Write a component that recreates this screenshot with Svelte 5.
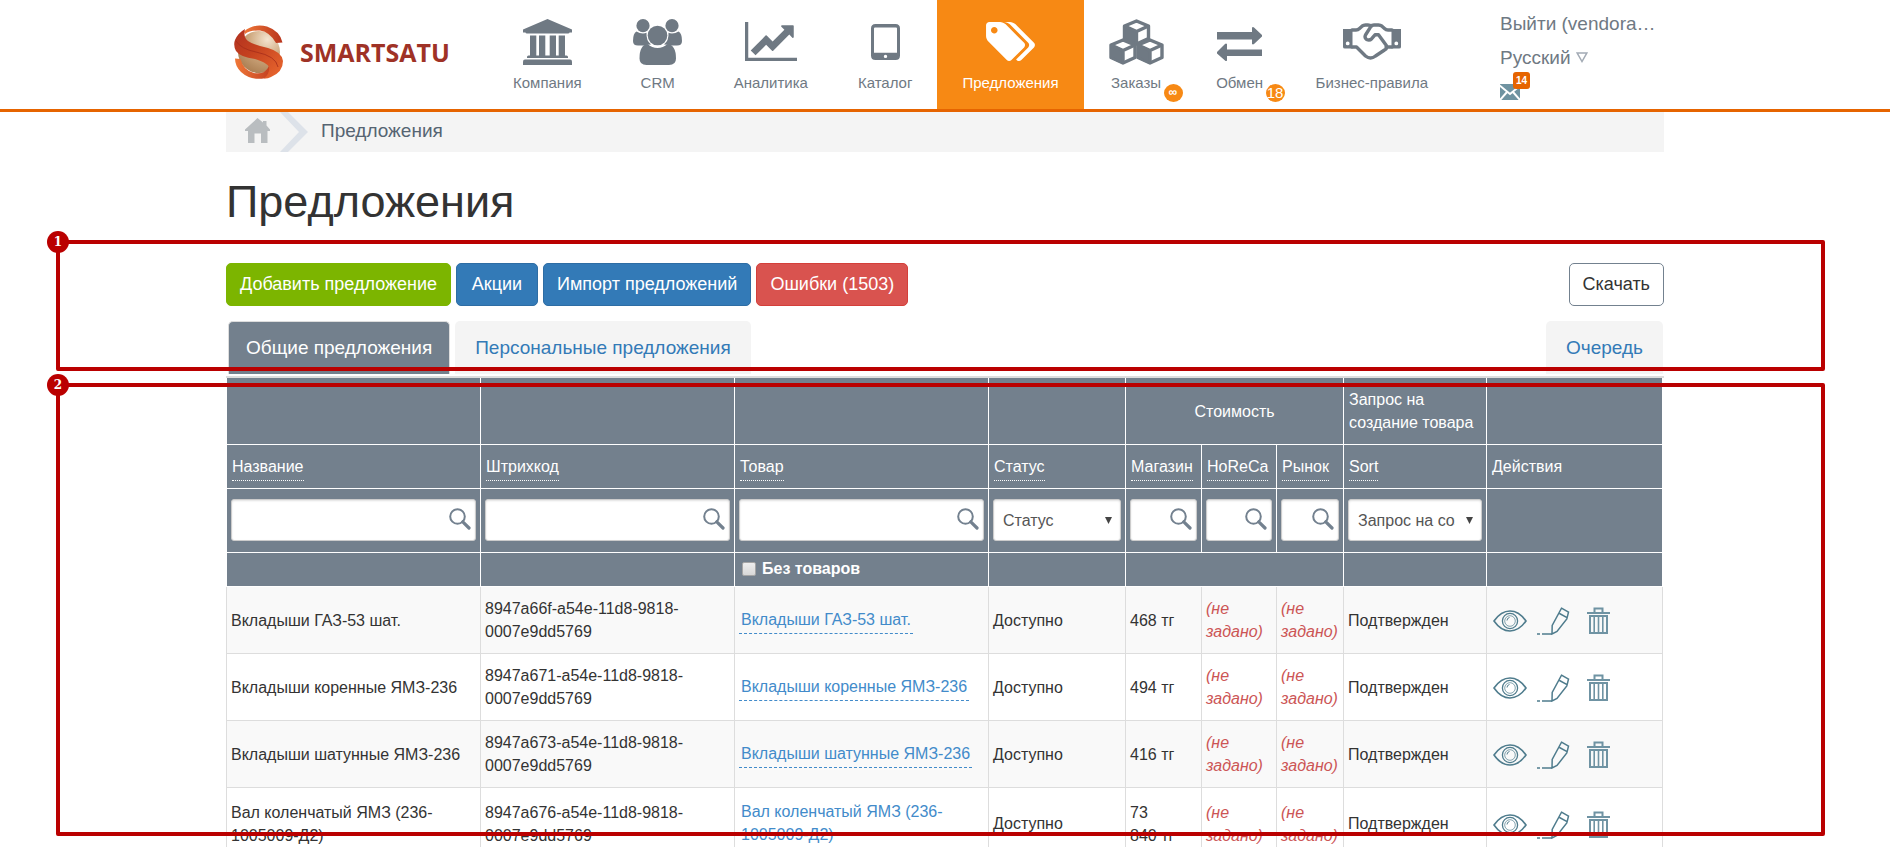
<script lang="ts">
  type NavItem = { id: string; label: string; active?: boolean; badge?: string; small?: boolean };

  const nav: NavItem[] = [
    { id: "company", label: "Компания" },
    { id: "crm", label: "CRM" },
    { id: "analytics", label: "Аналитика" },
    { id: "catalog", label: "Каталог" },
    { id: "offers", label: "Предложения", active: true },
    { id: "orders", label: "Заказы", badge: "∞", small: true },
    { id: "exchange", label: "Обмен", badge: "18" },
    { id: "rules", label: "Бизнес-правила" },
  ];

  const rows = [
    { name: "Вкладыши ГАЗ-53 шат.", code: "8947a66f-a54e-11d8-9818-0007e9dd5769", price: "468 тг" },
    { name: "Вкладыши коренные ЯМЗ-236", code: "8947a671-a54e-11d8-9818-0007e9dd5769", price: "494 тг" },
    { name: "Вкладыши шатунные ЯМЗ-236", code: "8947a673-a54e-11d8-9818-0007e9dd5769", price: "416 тг" },
    { name: "Вал коленчатый ЯМЗ (236-1005009-Д2)", code: "8947a676-a54e-11d8-9818-0007e9dd5769", price: "73\n840 тг" },
  ];

  const sortable = ["Название", "Штрихкод", "Товар", "Статус", "Магазин", "HoReCa", "Рынок", "Sort"];

  let filters = $state({ name: "", code: "", product: "", shop: "", horeca: "", market: "" });
  let withoutGoods = $state(false);
</script>

{#snippet navIcon(id: string)}
  {#if id === "company"}
    <svg width="49" height="46" viewBox="0 0 49 46" fill="currentColor">
      <path d="M24.500 0 49 10.500V13.500H46.500Q46.500 14.500 45 14.500H4Q2.500 14.500 2.500 13.500H0V10.500Z" />
      <path d="M7 16.500h6.300v20H16v-20h6.300v20h4.400v-20H33v20h2.700v-20H42v20h1.500q1.500 0 1.500 1.500v1H4v-1q0-1.500 1.500-1.500H7z" />
      <path d="M2 40.500h45q2 0 2 2V46H0v-3.500q0-2 2-2z" />
    </svg>
  {:else if id === "crm"}
    <svg width="49" height="46" viewBox="0 0 49 46" fill="currentColor">
      <circle cx="10" cy="6.700" r="6.600" />
      <circle cx="39" cy="6.700" r="6.600" />
      <circle cx="24.500" cy="16.500" r="9.800" />
      <path d="M3.500 12.500q3 2 6.500 2 2 0 3.500-.700-.500 8 4.500 11.700-4 0-7 1H5q-5 0-5-4.500 0-8 3.500-9.500z" />
      <path d="M45.500 12.500q-3 2-6.500 2-2 0-3.500-.700.500 8-4.500 11.700 4 0 7 1H44q5 0 5-4.500 0-8-3.500-9.500z" />
      <path d="M14.500 25q4.500 4 10 4t10-4q8.500 1 8.500 14.500 0 6.500-7 6.500H13.500Q6.500 46 6.500 39.500 6.500 26 14.500 25z" />
    </svg>
  {:else if id === "analytics"}
    <svg width="52" height="39" viewBox="0 128 2048 1536" fill="currentColor">
      <path d="M2048 1536v128h-2048v-1536h128v1408h1920zm-128-1248v435q0 21-19.500 29.500t-35.500-7.500l-121-121-633 633q-10 10-23 10t-23-10l-233-233-416 416-192-192 585-585q10-10 23-10t23 10l233 233 464-464-121-121q-16-16-7.500-35.500t29.500-19.500h435q14 0 23 9t9 23z" />
    </svg>
  {:else if id === "catalog"}
    <svg width="29" height="36" viewBox="0 0 29 36" fill="currentColor">
      <path fill-rule="evenodd" d="M4.500 0h20Q29 0 29 4.500v27q0 4.500-4.500 4.500h-20Q0 36 0 31.500v-27Q0 0 4.500 0zM4 3.500Q3 3.500 3 4.500v24.200h23V4.500q0-1-1-1zM14.500 30.700a1.700 1.700 0 1 0 0 3.400 1.700 1.700 0 0 0 0-3.400z" />
    </svg>
  {:else if id === "offers"}
    <svg width="49" height="39" viewBox="128 128 1900 1515" fill="currentColor">
      <path d="M576 448q0-53-37.500-90.500t-90.500-37.500-90.500 37.500-37.500 90.500 37.500 90.500 90.500 37.500 90.500-37.500 37.500-90.500zm1067 576q0 53-37 90l-491 492q-39 37-91 37-53 0-90-37l-715-716q-38-37-64.500-101t-26.500-117v-416q0-52 38-90t90-38h416q53 0 117 26.500t102 64.500l715 714q37 39 37 91zm384 0q0 53-37 90l-491 492q-39 37-91 37-36 0-59-14t-53-45l470-470q37-37 37-90 0-52-37-91l-715-714q-38-38-102-64.500t-117-26.500h224q53 0 117 26.500t102 64.500l715 714q37 39 37 91z" />
    </svg>
  {:else if id === "orders"}
    <svg width="55" height="46" viewBox="0 0 55 46" fill="none" stroke="currentColor" stroke-width="3.400" stroke-linejoin="round">
      {#each [[27.5, 2], [14, 21], [41, 21]] as [x, y]}
        <path fill="#fff" d="M{x} {y}l12 5v12.500l-12 5.500-12-5.500V{y + 5}z" />
        <path fill="currentColor" stroke-width="2" d="M{x - 12} {y + 5}l12 5.500V{y + 23}l-12-5.500z" />
        <path d="M{x - 12} {y + 5}l12 5.500 12-5.500M{x} {y + 10.5}V{y + 23}" />
      {/each}
    </svg>
  {:else if id === "exchange"}
    <svg width="45" height="38" viewBox="0 -4 45 38" fill="currentColor">
      <path d="M0 5h35V.500q1-1 2 0L45 8q.500.700 0 1.400L37 17q-1 .800-2 0v-4.500H0zM45 22.500v6.500H10v4.500q-1 1-2 0L0 26.500q-.500-.700 0-1.400L8 17q1-.800 2 0v5.500z" />
    </svg>
  {:else}
    <svg width="58" height="37" viewBox="0 0 58 37" fill="none" stroke="currentColor" stroke-width="3.400" stroke-linejoin="round" stroke-linecap="round">
      <path fill="currentColor" stroke="none" fill-rule="evenodd" d="M0 6h9.500v19.500H2Q0 25.500 0 24zM4.700 18.500a1.900 1.900 0 1 0 0 3.800 1.900 1.900 0 0 0 0-3.800zM58 6h-9.500v19.500H56q2 0 2-1.500zM53.300 18.500a1.900 1.900 0 1 1 0 3.800 1.900 1.900 0 0 1 0-3.800z" />
      <path d="M9 7h4q2 0 3.500-1.500L19 3.200Q20.500 2 22.500 2H25q2 0 3.500 1.200M49 7h-4q-2 0-3.500-1.500L39 3.200Q37.500 2 35.500 2H31q-2 0-3.200 1.700L22.500 12q-1.300 3 1.200 4.500 2.800 1.500 5-.800l3.300-3.900h3.500l7.500 10.200q2 3.300-1.500 5l-9 6Q27.500 37 22.500 33L13.500 24H9M43 24h6" />
    </svg>
  {/if}
{/snippet}

{#snippet search(key: keyof typeof filters, label: string)}
  <div class="field">
    <input type="text" aria-label={label} bind:value={filters[key]} />
    <svg width="22" height="22" viewBox="0 0 22 22" fill="none" stroke="#73818f">
      <circle cx="8.500" cy="8.500" r="7.300" stroke-width="2" />
      <path d="M13.800 13.800 20 20" stroke-width="3.200" stroke-linecap="round" />
    </svg>
  </div>
{/snippet}

{#snippet picker(label: string)}
  <div class="field">
    <select aria-label={label}><option>{label}</option></select>
    <svg class="caret" width="7" height="7" viewBox="0 0 7 7" fill="#444"><path d="M0 0h7L3.500 7z" /></svg>
  </div>
{/snippet}

<header>
  <div class="container bar">
    <a class="logo" href="#home">
      <svg width="50" height="54" viewBox="0 0 50 54">
        <defs>
          <linearGradient id="band" x1="0" y1="0" x2="1" y2="1">
            <stop offset="0" stop-color="#b03020" />
            <stop offset=".4" stop-color="#c4411f" />
            <stop offset="1" stop-color="#ec6a30" />
          </linearGradient>
          <linearGradient id="arc" x1="0" y1="0" x2="1" y2="0">
            <stop offset="0" stop-color="#f07838" />
            <stop offset="1" stop-color="#b8341c" />
          </linearGradient>
          <radialGradient id="ball" cx=".7" cy=".2" r=".9">
            <stop offset="0" stop-color="#f4e4cf" />
            <stop offset=".5" stop-color="#cda67c" />
            <stop offset="1" stop-color="#a87c50" />
          </radialGradient>
        </defs>
        <circle cx="25" cy="27" r="21" fill="url(#ball)" />
        <path fill="url(#arc)" d="M10 6.500Q20-2 33 1.500 46 6 48.500 17.500L42 18Q36 7 26 5.500 16 5 11 9z" />
        <path fill="url(#arc)" d="M1 33.500l5.500.500Q9 45 20 48q11 2 15-7l10 3Q41 50 31 53.200 17 56 7 47 1 41 1 33.500z" />
        <path fill="url(#band)" d="M11 4Q9 12 14 16q6 4 20 7 14 4 15 13 0 11-12 16-4 2-7 1.500 6-5 5-11.500-3-5-14-8Q6 32 2 26-1 20 1 15 4 8 11 4z" />
        <path fill="none" stroke="#a52c1a" stroke-width=".8" d="M2 16q5 8 20 11 20 4 22 15" />
      </svg>
      <span>SMARTSATU</span>
    </a>

    <nav>
      {#each nav as item}
        <a href="#{item.id}" class:active={item.active}>
          <span class="pic">{@render navIcon(item.id)}</span>
          {item.label}
          {#if item.badge}
            <span class="badge" class:small={item.small}>{item.badge}</span>
          {/if}
        </a>
      {/each}
    </nav>

    <div class="user">
      <a href="#logout">Выйти (vendora…</a>
      <button type="button" class="lang">
        Русский
        <svg width="12" height="11" viewBox="0 0 12 11" fill="none" stroke="#a3abb5" stroke-width="1.500"><path d="M1.200 1h9.600L6 9.500z" /></svg>
      </button>
      <a class="mail" href="#mail" aria-label="Сообщения">
        <svg width="20" height="16" viewBox="0 0 20 16">
          <path fill="#6f93a1" d="M0 0h20v16H0z" />
          <path fill="none" stroke="#fff" stroke-width="2" d="M-1 1l11 9L21 1M0 16l7-8M20 16l-7-8" />
        </svg>
        <span class="count">14</span>
      </a>
    </div>
  </div>
</header>

<main class="container">
  <div class="crumbs">
    <a class="home" href="#home" aria-label="Главная">
      <svg width="25" height="25" viewBox="0 0 25 25" fill="#b9bdc0"><path d="M12.500 0 18 4.500V3h3.500v4.500L25 11.500V13h-2.500v12H16v-9.500H9.500V25H3V13H0v-1.500z" /></svg>
    </a>
    <svg width="28" height="40" viewBox="0 0 28 40" fill="#dde2e9"><path d="M0 0h8l20 20L8 40H0l19-20z" /></svg>
    <span>Предложения</span>
  </div>

  <h1>Предложения</h1>

  <section class="controls">
    <div class="toolbar">
      <button type="button" class="btn green">Добавить предложение</button>
      <button type="button" class="btn blue">Акции</button>
      <button type="button" class="btn blue">Импорт предложений</button>
      <button type="button" class="btn red">Ошибки (1503)</button>
      <button type="button" class="btn plain">Скачать</button>
    </div>
    <div class="tabs">
      <a class="current" href="#common">Общие предложения</a>
      <a href="#personal">Персональные предложения</a>
      <a class="last" href="#queue">Очередь</a>
    </div>
    <div class="frame frame-top"><b>1</b></div>
  </section>

  <section class="grid">
    <table>
      <colgroup>
        <col class="wide" /><col class="wide" /><col class="wide" />
        <col class="status" /><col class="shop" /><col class="horeca" /><col class="market" />
        <col class="request" /><col />
      </colgroup>
      <thead>
        <tr class="groups">
          <th></th><th></th><th></th><th></th>
          <th colspan="3" class="center">Стоимость</th>
          <th>Запрос на создание товара</th>
          <th></th>
        </tr>
        <tr class="labels">
          {#each sortable as label}
            <th><a href="#sort">{label}</a></th>
          {/each}
          <th>Действия</th>
        </tr>
        <tr class="filters">
          <td>{@render search("name", "Название")}</td>
          <td>{@render search("code", "Штрихкод")}</td>
          <td>{@render search("product", "Товар")}</td>
          <td>{@render picker("Статус")}</td>
          <td>{@render search("shop", "Магазин")}</td>
          <td>{@render search("horeca", "HoReCa")}</td>
          <td>{@render search("market", "Рынок")}</td>
          <td>{@render picker("Запрос на создание товара")}</td>
          <td></td>
        </tr>
        <tr class="extra">
          <td></td><td></td>
          <td><label><input type="checkbox" bind:checked={withoutGoods} />Без товаров</label></td>
          <td></td><td colspan="3"></td><td></td><td></td>
        </tr>
      </thead>
      <tbody>
        {#each rows as row}
          <tr>
            <td>{row.name}</td>
            <td>{row.code}</td>
            <td><a class="product" href="#product">{row.name}</a></td>
            <td>Доступно</td>
            <td class="price">{row.price}</td>
            <td class="unset">(не задано)</td>
            <td class="unset">(не задано)</td>
            <td>Подтвержден</td>
            <td>
              <div class="actions">
                <button type="button" aria-label="Просмотр">
                  <svg width="34" height="22" viewBox="0 0 34 22" fill="none" stroke="#4f7c8d" stroke-width="1.600">
                    <path d="M1 11Q8 1 17 1t16 10q-7 10-16 10T1 11z" />
                    <circle cx="17" cy="11" r="7.600" stroke-width="1.300" />
                    <circle cx="17" cy="11" r="5.300" stroke-width=".7" />
                    <path d="M14 10.500q0-2.500 2.500-3" stroke-width="1" />
                  </svg>
                </button>
                <button type="button" aria-label="Изменить">
                  <svg width="33" height="28" viewBox="0 0 33 28" fill="none" stroke="#4f7c8d" stroke-width="1.500">
                    <path d="M24.500 1.200l7 4L29.800 12 20 24.500 15 27l.200-8.500zM22.500 6.500l8 4.300M15 27H5M3 27H0" />
                  </svg>
                </button>
                <button type="button" aria-label="Удалить">
                  <svg width="23" height="28" viewBox="0 0 23 28" fill="none" stroke="#6f93a3" stroke-width="2">
                    <path d="M0 6h23M7.500 5V1.500h8V5M3 9h17v17H3z" />
                    <path d="M7.200 9v17M11.500 9v17M15.800 9v17" stroke-width="1.600" />
                  </svg>
                </button>
              </div>
            </td>
          </tr>
        {/each}
      </tbody>
    </table>
    <div class="frame frame-table"><b>2</b></div>
  </section>
</main>

<style>
  :global(body) {
    background: #fff;
    color: #333;
    font: 16px/23px "Liberation Sans", Arial, sans-serif;
    overflow-x: hidden;
  }
  * {
    box-sizing: border-box;
  }
  a {
    color: inherit;
    text-decoration: none;
  }
  button {
    font: inherit;
    color: inherit;
    background: none;
    border: 0;
    padding: 0;
    cursor: pointer;
  }
  svg {
    display: block;
  }
  .container {
    max-width: 1438px;
    margin: 0 auto;
  }

  header {
    border-bottom: 3px solid #e66400;
  }
  .bar {
    display: flex;
    height: 109px;
  }
  .logo {
    display: flex;
    align-items: center;
    gap: 16px;
    width: 262px;
    padding: 0 0 5px 8px;
    color: #9f3226;
    font: bold 25px/30px "Open Sans", sans-serif;
  }
  nav {
    display: flex;
  }
  nav a {
    position: relative;
    padding: 0 25px;
    color: #6f7983;
    font-size: 15px;
    text-align: center;
  }
  nav a.active {
    background: #f78914;
    color: #fff;
  }
  .pic {
    display: flex;
    align-items: center;
    justify-content: center;
    min-width: 52px;
    height: 71px;
    padding-top: 12px;
  }
  .badge {
    position: absolute;
    right: 6px;
    top: 84px;
    width: 19px;
    height: 18px;
    border-radius: 50%;
    background: #f78914;
    color: #fff;
    font-size: 15px;
    line-height: 18px;
  }
  .badge.small {
    font-size: 12px;
    font-weight: bold;
    line-height: 16px;
  }
  .user {
    width: 164px;
    margin-left: auto;
    padding-top: 7px;
    color: #6f7983;
    font-size: 19px;
    line-height: 34px;
  }
  .user > * {
    display: block;
  }
  .user .lang {
    display: flex;
    align-items: center;
    gap: 5px;
  }
  .user .lang svg {
    margin-bottom: 2px;
  }
  .user .mail {
    position: relative;
    width: 30px;
    padding-top: 9px;
  }
  .count {
    position: absolute;
    left: 13px;
    top: -3px;
    width: 17px;
    border-radius: 3px;
    background: #e66400;
    color: #fff;
    font-size: 10px;
    font-weight: bold;
    line-height: 17px;
    text-align: center;
  }

  .crumbs {
    display: flex;
    align-items: center;
    height: 40px;
    padding-left: 19px;
    background: #f4f4f4;
    color: #566472;
    font-size: 19px;
  }
  .home {
    margin: 0 10px 3px 0;
  }
  .crumbs span {
    margin: 0 0 3px 13px;
  }
  h1 {
    margin: 25px 0 36px;
    font-size: 45px;
    font-weight: normal;
    line-height: 50px;
  }

  .controls,
  .grid {
    position: relative;
  }
  .toolbar {
    display: flex;
    gap: 5px;
  }
  .btn {
    min-width: 82px;
    height: 43px;
    padding: 0 13px;
    border: 1px solid;
    border-radius: 5px;
    color: #fff;
    font-size: 18px;
  }
  .green {
    background: #7cb500;
    border-color: #7cb500;
  }
  .blue {
    background: #337ab7;
    border-color: #2e6da4;
  }
  .red {
    background: #d9534f;
    border-color: #d43f3a;
  }
  .plain {
    margin-left: auto;
    border-color: #73818f;
    color: #333;
  }
  .tabs {
    display: flex;
    gap: 5px;
    margin: 15px 1px 0 2px;
  }
  .tabs a {
    height: 53px;
    padding: 0 20px;
    border-radius: 5px 5px 0 0;
    background: #f4f4f4;
    color: #337ab7;
    font-size: 19px;
    line-height: 54px;
  }
  .tabs .current {
    padding: 0 17px;
    border: 1px solid #ddd;
    border-bottom: 0;
    background: #73808d;
    color: #fff;
    line-height: 52px;
  }
  .tabs .last {
    margin-left: auto;
  }

  .grid {
    margin-top: 2px;
    border-top: 2px solid #ddd;
  }
  table {
    width: calc(100% - 1px);
    border-collapse: collapse;
    table-layout: fixed;
  }
  .wide {
    width: 254px;
  }
  .status {
    width: 137px;
  }
  .shop {
    width: 76px;
  }
  .horeca {
    width: 75px;
  }
  .market {
    width: 67px;
  }
  .request {
    width: 143px;
  }
  th,
  td {
    padding: 10px 4px;
    border: 1px solid #ddd;
    text-align: left;
    font-weight: normal;
    vertical-align: middle;
  }
  thead {
    background: #73808d;
    color: #fff;
  }
  thead th,
  thead td {
    border-color: #fff;
  }
  thead th {
    padding: 10px 5px;
  }
  thead .center {
    text-align: center;
  }
  .groups th {
    border-top: 0;
  }
  .labels th {
    height: 44px;
    padding: 10px 5px 0;
    vertical-align: top;
  }
  .labels a {
    display: inline-block;
    padding-bottom: 2px;
    border-bottom: 1px dotted #fff;
  }
  .filters td {
    height: 64px;
    padding: 0 4px 1px;
  }
  .field {
    position: relative;
  }
  .field input,
  .field select {
    display: block;
    width: 100%;
    height: 42px;
    padding: 0 26px 0 9px;
    appearance: none;
    border: 1px solid #ccc;
    border-radius: 3px;
    background: #fff;
    box-shadow: inset 0 1px 2px rgba(0, 0, 0, 0.12);
    color: #555;
    font: inherit;
  }
  .field svg {
    position: absolute;
    right: 5px;
    top: 9px;
    pointer-events: none;
  }
  .field .caret {
    right: 9px;
    top: 18px;
  }
  .extra td {
    height: 34px;
    padding: 0 4px;
  }
  .extra label {
    display: flex;
    align-items: center;
    gap: 6px;
    padding: 0 0 2px 3px;
    font-weight: bold;
  }
  .extra input {
    width: 14px;
    height: 14px;
    margin: 0;
    appearance: none;
    border: 1px solid #a5a5a5;
    border-radius: 2px;
    background: linear-gradient(#eee, #d8d8d8);
  }
  .extra input:checked {
    background: #337ab7;
  }
  tbody tr:nth-child(odd) {
    background: #f9f9f9;
  }
  .product {
    display: inline-block;
    padding: 2px;
    border-bottom: 1px dashed #428bca;
    color: #428bca;
    vertical-align: middle;
  }
  .price {
    white-space: pre-line;
  }
  .unset {
    color: #c55;
    font-style: italic;
  }
  .actions {
    display: flex;
    align-items: center;
    padding: 2px 0 0 2px;
    gap: 10px;
  }
  .actions button:last-child {
    margin-left: 7px;
  }

  /* numbered callouts drawn over the page */
  .frame {
    position: absolute;
    left: -170px;
    right: -161px;
    border: 4px solid #ba0000;
    border-radius: 2px;
    pointer-events: none;
  }
  .frame b {
    position: absolute;
    left: -13px;
    top: -13px;
    width: 22px;
    height: 22px;
    border-radius: 50%;
    background: #ba0000;
    color: #fff;
    font: bold 12px/22px "DejaVu Serif", serif;
    text-align: center;
  }
  .frame-top {
    top: -23px;
    height: 131px;
  }
  .frame-table {
    top: 5px;
    height: 453px;
  }
</style>
